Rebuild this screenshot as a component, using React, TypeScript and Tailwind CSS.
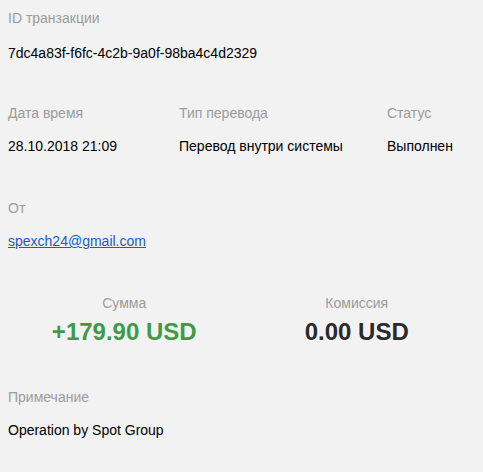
const font = "font-['Liberation_Sans',Arial,sans-serif]";

function Label({ children }: { children: React.ReactNode }) {
  return <div className="text-[14px] leading-[20px] text-[#9b9b9b]">{children}</div>;
}

function Value({ children }: { children: React.ReactNode }) {
  return <div className="mt-[13px] text-[14px] leading-[20px] text-black">{children}</div>;
}

export default function App() {
  return (
    <div className={`${font} min-h-[472px] w-[483px] bg-[#f2f2f2] px-2 pt-2`}>
      <section>
        <Label>ID транзакции</Label>
        <div className="mt-[15px] text-[14px] leading-[20px] text-black">
          7dc4a83f-f6fc-4c2b-9a0f-98ba4c4d2329
        </div>
      </section>

      <section className="mt-[40px] grid grid-cols-[171px_208px_1fr]">
        <div>
          <Label>Дата время</Label>
          <Value>28.10.2018 21:09</Value>
        </div>
        <div>
          <Label>Тип перевода</Label>
          <Value>Перевод внутри системы</Value>
        </div>
        <div>
          <Label>Статус</Label>
          <Value>Выполнен</Value>
        </div>
      </section>

      <section className="mt-[42px]">
        <Label>От</Label>
        <div className="mt-[13px] text-[14px] leading-[20px]">
          <a href="#" className="text-[#1a5bc8] underline">
            spexch24@gmail.com
          </a>
        </div>
      </section>

      <section className="mt-[42px] grid w-[465px] grid-cols-2 text-center">
        <div>
          <Label>Сумма</Label>
          <div className="mt-[5px] text-[24px] font-bold leading-[28px] text-[#3f9a48]">
            +179.90 USD
          </div>
        </div>
        <div>
          <Label>Комиссия</Label>
          <div className="mt-[5px] text-[24px] font-bold leading-[28px] text-[#2a2a2a]">
            0.00 USD
          </div>
        </div>
      </section>

      <section className="mt-[41px]">
        <Label>Примечание</Label>
        <Value>Operation by Spot Group</Value>
      </section>
    </div>
  );
}
